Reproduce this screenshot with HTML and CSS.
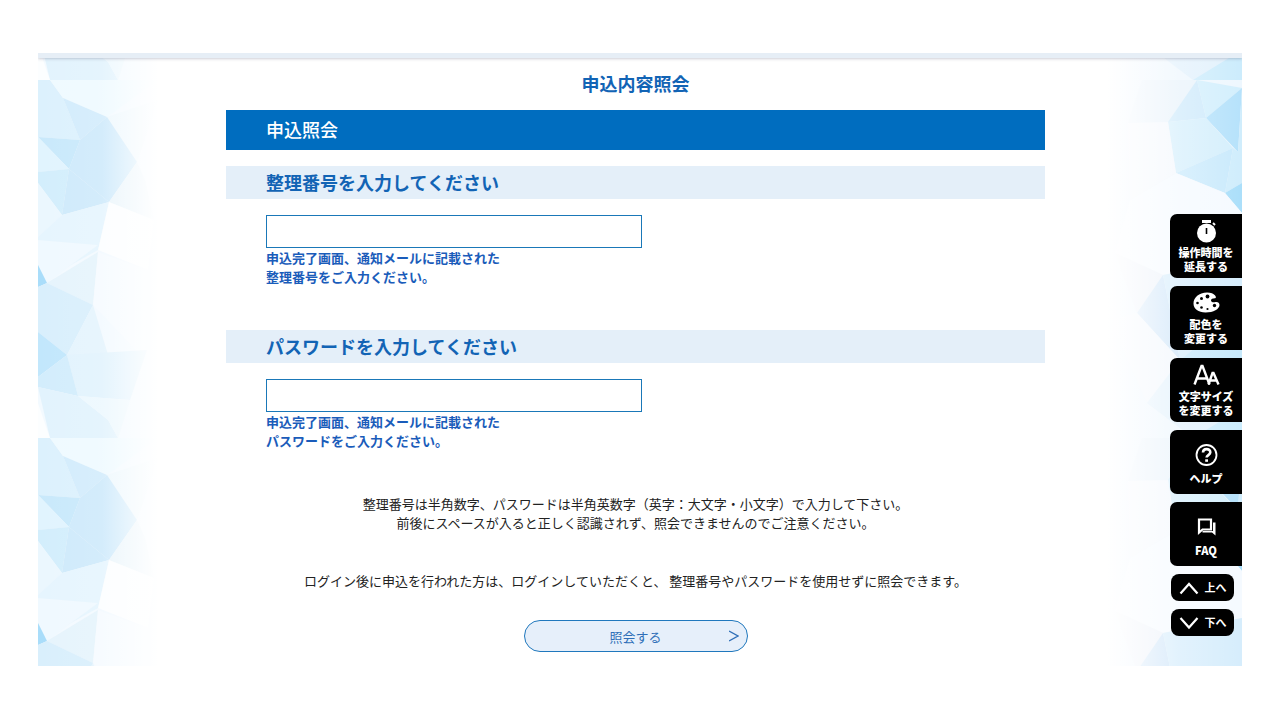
FILE: index.html
```html
<!DOCTYPE html>
<html lang="ja">
<head>
    <meta charset="UTF-8">
    <meta name="viewport" content="width=device-width, initial-scale=1.0">
    <title>申込内容照会</title>
    <link rel="stylesheet" href="styles.css">
</head>
<body>
    <div class="page">
        <svg class="facets facets-left" width="142" height="614" aria-hidden="true">
            <defs>
                <linearGradient id="fade-left">
                    <stop offset="0" stop-color="#fff" stop-opacity="0"/>
                    <stop offset="0.45" stop-color="#fff" stop-opacity="0.1"/>
                    <stop offset="0.85" stop-color="#fff" stop-opacity="1"/>
                </linearGradient>
                <pattern id="tile-left" y="27" width="142" height="358" patternUnits="userSpaceOnUse">
                    <rect width="142" height="358" fill="#f3faff"/>
                    <polygon points="0,0 12,0 25,18 42,60 0,57" fill="#dcf1fd"/>
                    <polygon points="12,0 70,0 120,0 69,37 25,18" fill="#effaff"/>
                    <polygon points="25,18 69,37 42,60" fill="#d3ecfc"/>
                    <polygon points="69,37 120,20 99,82" fill="#eef8fd"/>
                    <polygon points="42,60 69,37 99,82 71,122 31,89" fill="#cfeafb"/>
                    <polygon points="0,57 42,60 31,89" fill="#c9e9fb"/>
                    <polygon points="0,57 31,89 0,92" fill="#e1f4fe"/>
                    <polygon points="0,92 31,89 24,135 0,103" fill="#d3eefc"/>
                    <polygon points="31,89 71,122 24,135" fill="#cfeafb"/>
                    <polygon points="99,82 107,100 116,140 71,122" fill="#eaf5fb"/>
                    <polygon points="0,103 24,135 0,157" fill="#ebf7fe"/>
                    <polygon points="24,135 71,122 60,170 0,203 0,157" fill="#e6f5fe"/>
                    <polygon points="0,160 60,165 9,203 0,185" fill="#f0f9ff"/>
                    <polygon points="71,122 116,140 110,190 60,170" fill="#fcfeff"/>
                    <polygon points="0,185 9,203 0,207" fill="#a9ddfa"/>
                    <polygon points="9,203 60,172 55,225" fill="#e6f4fc"/>
                    <polygon points="60,172 110,190 107,280 55,225" fill="#f6fbff"/>
                    <polygon points="0,207 9,203 55,225 29,275 0,252" fill="#d9effc"/>
                    <polygon points="55,225 70,275 29,275" fill="#e5f4fd"/>
                    <polygon points="0,252 29,275 0,297" fill="#c2e7fc"/>
                    <polygon points="29,275 109,270 92,320 40,316" fill="#e2f3fd"/>
                    <polygon points="0,297 29,275 40,316 0,307" fill="#d3edfc"/>
                    <polygon points="0,307 40,316 70,340 80,358 12,358" fill="#e2f3fd"/>
                    <polygon points="40,316 92,320 80,358 70,340" fill="#edf8fe"/>
                    <polygon points="0,323 12,358 0,358" fill="#fcfeff"/>
                </pattern>
            </defs>
            <rect width="142" height="614" fill="url(#tile-left)"/>
            <rect width="142" height="614" fill="url(#fade-left)"/>
        </svg>
        <svg class="facets facets-right" width="142" height="614" aria-hidden="true">
            <defs>
                <linearGradient id="fade-right">
                    <stop offset="0.05" stop-color="#fff" stop-opacity="1"/>
                    <stop offset="0.55" stop-color="#fff" stop-opacity="0.3"/>
                    <stop offset="1" stop-color="#fff" stop-opacity="0"/>
                </linearGradient>
                <pattern id="tile-right" y="27" width="142" height="358" patternUnits="userSpaceOnUse">
                    <rect width="142" height="358" fill="#eef7fe"/>
                    <polygon points="42,0 97,0 68,42 28,43" fill="#e9f3fb"/>
                    <polygon points="97,0 106,38 68,42" fill="#cfeafb"/>
                    <polygon points="97,0 142,8 106,38" fill="#d3effd"/>
                    <polygon points="142,8 138,72 106,38" fill="#b6e2fb"/>
                    <polygon points="68,42 106,38 133,68 76,93" fill="#d5effc"/>
                    <polygon points="28,43 68,42 76,93 30,120" fill="#f4f8fd"/>
                    <polygon points="76,93 133,68 125,113" fill="#caeafc"/>
                    <polygon points="133,68 138,72 142,8 142,103 125,113" fill="#d0edfc"/>
                    <polygon points="125,113 142,103 142,133" fill="#abdffa"/>
                    <polygon points="30,120 76,93 125,113 142,133 142,180 63,195 15,173" fill="#f5faff"/>
                    <polygon points="15,173 63,195 37,233" fill="#edf2fa"/>
                    <polygon points="63,195 80,280 37,233" fill="#cfe5f9"/>
                    <polygon points="63,195 142,180 142,230 80,280" fill="#d6edfc"/>
                    <polygon points="80,280 142,230 142,300" fill="#c7e9fb"/>
                    <polygon points="10,240 37,233 80,280 47,323" fill="#f2f7fd"/>
                    <polygon points="47,323 80,280 142,300 142,340 93,358" fill="#e2f1fc"/>
                    <polygon points="93,358 142,328 142,358" fill="#ccecfc"/>
                </pattern>
            </defs>
            <rect width="142" height="614" fill="url(#tile-right)"/>
            <rect width="142" height="614" fill="url(#fade-right)"/>
        </svg>
        <div class="topbar"></div>

        <main class="content">
            <h1>申込内容照会</h1>
            <form>
                <h2>申込照会</h2>

                <h3><label for="receipt-number">整理番号を入力してください</label></h3>
                <div class="field">
                    <input type="text" id="receipt-number">
                    <p class="hint">申込完了画面、通知メールに記載された<br>整理番号をご入力ください。</p>
                </div>

                <h3><label for="password">パスワードを入力してください</label></h3>
                <div class="field">
                    <input type="password" id="password">
                    <p class="hint">申込完了画面、通知メールに記載された<br>パスワードをご入力ください。</p>
                </div>

                <p class="note">整理番号は半角数字、パスワードは半角英数字（英字：大文字・小文字）で入力して下さい。<br>前後にスペースが入ると正しく認識されず、照会できませんのでご注意ください。</p>
                <p class="note">ログイン後に申込を行われた方は、ログインしていただくと、 整理番号やパスワードを使用せずに照会できます。</p>

                <button type="submit" class="submit">
                    <span>照会する</span>
                    <svg width="10" height="12" viewBox="0 0 10 12" aria-hidden="true"><path d="M0 1l9 5-9 5" fill="none" stroke="currentColor" stroke-width="1.4"/></svg>
                </button>
            </form>
        </main>

        <nav class="side-menu">
            <button type="button">
                <svg width="24" height="24" viewBox="0 0 24 24" aria-hidden="true">
                    <path d="M8 1h9v3H8z" fill="#fff"/>
                    <path d="M19 4l2 2" stroke="#fff" stroke-width="2"/>
                    <circle cx="12.500" cy="14" r="9.500" fill="#fff"/>
                    <path d="M12.500 9v6" stroke="#000" stroke-width="1.600"/>
                </svg>
                <span>操作時間を<br>延長する</span>
            </button>
            <button type="button">
                <svg width="28" height="24" viewBox="0 0 28 24" aria-hidden="true">
                    <path d="M15 1.500C7 1.500 1.500 6.500 1.500 12.500c0 5.500 5 9 12 9 8 0 14-3.500 14-7.500 0-2.500-2-3.500-4-3-2 .6-4.500.3-4.500-1.500 0-1.600 1.500-2 4-2.200C25.500 7 23 1.500 15 1.500z" fill="#fff"/>
                    <circle cx="15.500" cy="5.500" r="1.900"/>
                    <circle cx="9.500" cy="7.500" r="1.500"/>
                    <circle cx="5.500" cy="12" r="1.300"/>
                    <circle cx="9.500" cy="16.500" r="1.300"/>
                    <circle cx="15.500" cy="18" r="1.100"/>
                    <circle cx="22.500" cy="14.500" r="1.700"/>
                </svg>
                <span>配色を<br>変更する</span>
            </button>
            <button type="button">
                <svg width="28" height="24" viewBox="0 0 28 24" fill="none" stroke="#fff" stroke-width="2.400" aria-hidden="true">
                    <path d="M2.500 21.500L9.500 3h1l7 18.500M5 15.500h10"/>
                    <path d="M16.500 21.500L20.500 10h1l5 11.500M17.500 17.500h7"/>
                </svg>
                <span>文字サイズ<br>を変更する</span>
            </button>
            <button type="button" class="short">
                <svg width="24" height="24" viewBox="0 0 24 24" fill="none" stroke="#fff" aria-hidden="true">
                    <circle cx="12.500" cy="12" r="10" stroke-width="1.800"/>
                    <path d="M9 9.500C9 5 16.300 5 16.300 9.300c0 2.700-3.700 2.800-3.700 5.200" stroke-width="2.600"/>
                    <path d="M12.600 16.300v2.500" stroke-width="2.800"/>
                </svg>
                <span>ヘルプ</span>
            </button>
            <button type="button" class="short">
                <svg width="24" height="24" viewBox="0 0 24 24" aria-hidden="true">
                    <path d="M5 4.500h12v10H8.500L5 17.500z" fill="none" stroke="#fff" stroke-width="2.200"/>
                    <path d="M19 7.500h2.500V20.500L18 17.500H8.500V16H19z" fill="#fff"/>
                </svg>
                <span>FAQ</span>
            </button>
            <a href="#top" class="jump">
                <svg width="20" height="14" viewBox="0 0 20 14" aria-hidden="true"><path d="M1.500 12.500L10 3l8.500 9.500" fill="none" stroke="#fff" stroke-width="2.200"/></svg>
                上へ
            </a>
            <a href="#bottom" class="jump">
                <svg width="20" height="14" viewBox="0 0 20 14" aria-hidden="true"><path d="M1.500 2l8.500 9.500L18.500 2" fill="none" stroke="#fff" stroke-width="2.200"/></svg>
                下へ
            </a>
        </nav>
    </div>
</body>
</html>
```

FILE: styles.css
```css
* {
    box-sizing: border-box;
}
body {
    font-family: "Noto Sans CJK JP", sans-serif;
    font-size: 13px;
    line-height: 19px;
    margin: 0;
    padding: 53px 38px;
    background-color: #fff;
    color: #222;
}
h1, h2, h3, p {
    margin: 0;
}
.page {
    position: relative;
    overflow: hidden;
    padding: 0 0 14px;
}
.facets {
    position: absolute;
    top: 0;
}
.facets-left {
    left: 0;
}
.facets-right {
    right: 0;
}
.topbar {
    position: relative;
    height: 5px;
    background-color: #e6eef6;
    box-shadow: 0 1px 3px rgba(60, 60, 90, 0.25);
}
.content {
    position: relative;
    padding: 13px 197px 0 188px;
}
h1 {
    margin-bottom: 15px;
    font-size: 18px;
    font-weight: 700;
    line-height: 24px;
    text-align: center;
    color: #1264b5;
}
h2 {
    margin-bottom: 16px;
    padding: 0 40px 1px;
    font-size: 18px;
    font-weight: 500;
    line-height: 39px;
    background-color: #006dbf;
    color: #fff;
}
h3 {
    padding: 0 40px 1px;
    font-size: 18px;
    font-weight: 700;
    line-height: 32px;
    background-color: #e4eff9;
    color: #1264b5;
}
.field {
    padding: 16px 40px 44px;
}
.field input {
    display: block;
    width: 100%;
    max-width: 376px;
    height: 33px;
    padding: 0 8px;
    border: 1px solid #1a78b8;
    border-radius: 0;
    background-color: #fff;
    font: inherit;
}
.hint {
    font-weight: 700;
    color: #1a5cba;
}
.note {
    margin-bottom: 39px;
    text-align: center;
}
.note + .note {
    margin-bottom: 30px;
}
.submit {
    display: grid;
    grid-template-columns: 1fr auto 1fr;
    align-items: center;
    width: 224px;
    height: 32px;
    margin: 0 auto;
    padding: 0 8px;
    border: 1px solid #2078bd;
    border-radius: 16px;
    background-color: #e6effa;
    color: #2f6fb8;
    font: inherit;
    cursor: pointer;
}
.submit span {
    grid-column: 2;
}
.submit svg {
    justify-self: end;
}
.side-menu {
    position: absolute;
    top: 161px;
    right: 0;
    display: flex;
    flex-direction: column;
    gap: 8px;
}
.side-menu button {
    display: flex;
    flex-direction: column;
    align-items: center;
    justify-content: center;
    gap: 2px;
    width: 72px;
    height: 64px;
    padding: 0;
    border: none;
    border-radius: 7px 0 0 7px;
    background-color: #000;
    color: #fff;
    font-family: inherit;
    font-size: 11px;
    font-weight: 900;
    line-height: 14px;
    cursor: pointer;
}
.side-menu .short {
    gap: 4px;
    padding-top: 4px;
}
.jump {
    display: flex;
    align-items: center;
    justify-content: center;
    gap: 6px;
    width: 63px;
    height: 27px;
    margin-left: 1px;
    border-radius: 8px;
    background-color: #000;
    color: #fff;
    font-size: 11px;
    font-weight: 700;
    text-decoration: none;
}
```
